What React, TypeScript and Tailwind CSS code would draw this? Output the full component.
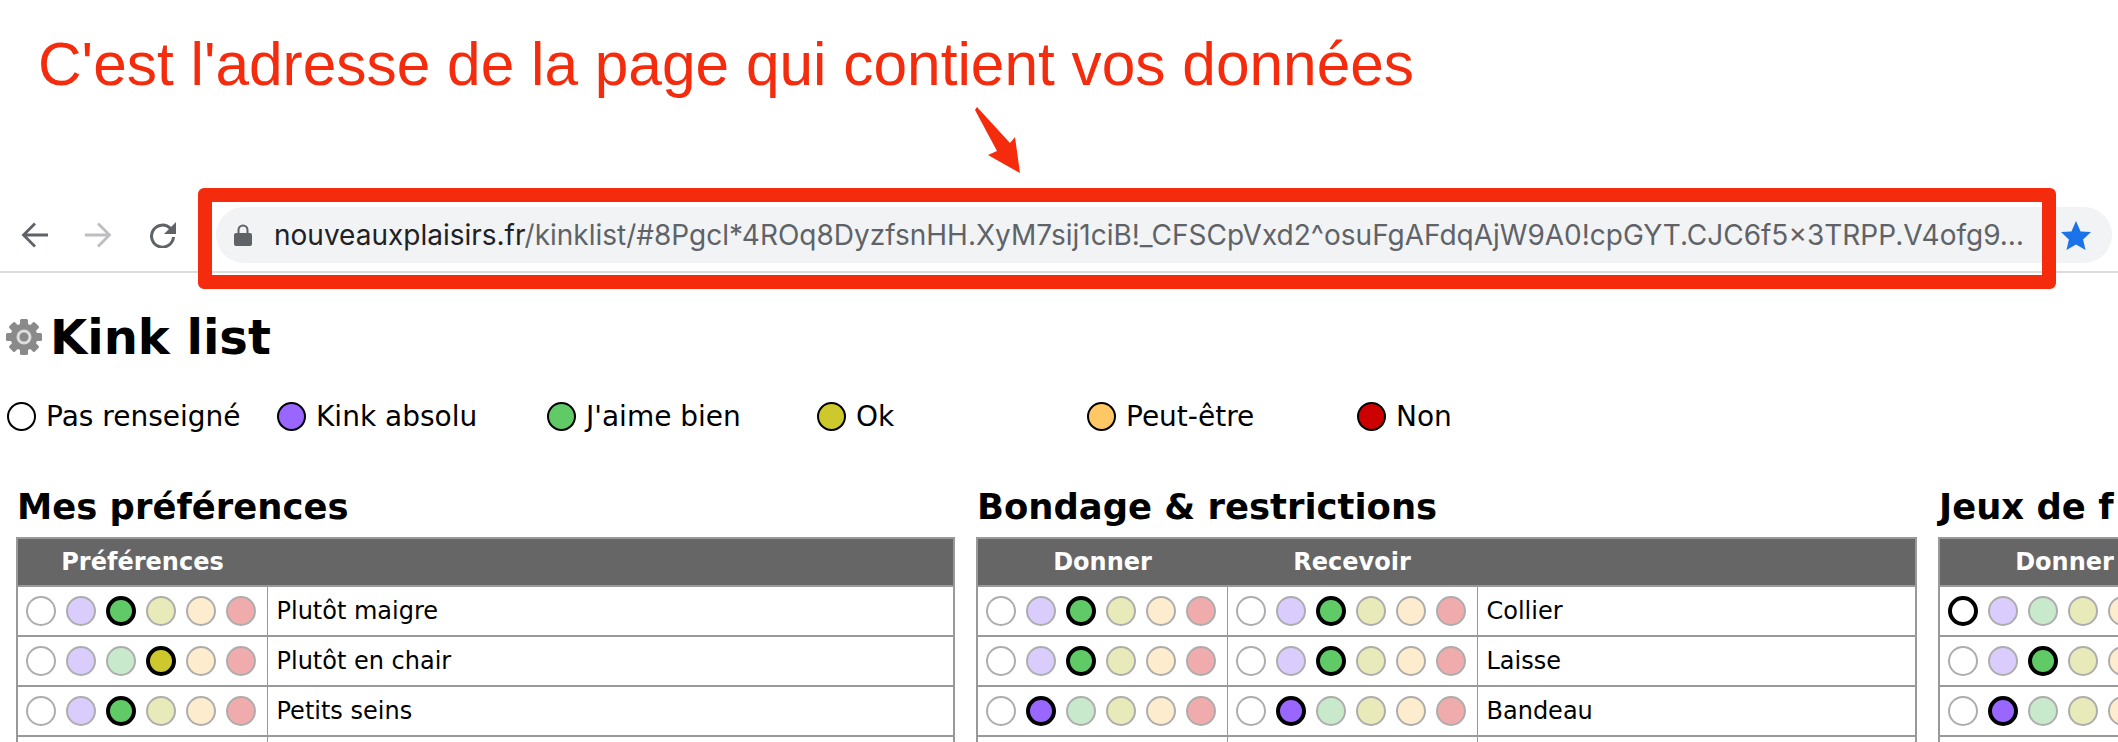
const sans = "font-['DejaVu_Sans',sans-serif]";

// couleurs des pastilles
const COLORS = [
  { on: "bg-white", off: "bg-white" },
  { on: "bg-[#9966ff]", off: "bg-[#dacdfe]" },
  { on: "bg-[#5fca66]", off: "bg-[#c9e9cc]" },
  { on: "bg-[#cdc82c]", off: "bg-[#e9eaba]" },
  { on: "bg-[#ffc864]", off: "bg-[#fdedce]" },
  { on: "bg-[#cc0000]", off: "bg-[#f0acac]" },
];

const LEGEND = ["Pas renseigné", "Kink absolu", "J'aime bien", "Ok", "Peut-être", "Non"];

function Dot({ color, selected }: { color: number; selected: boolean }) {
  const c = COLORS[color];
  return (
    <span
      className={`block w-[30px] h-[30px] shrink-0 rounded-full ${
        selected ? `${c.on} border-[4px] border-black` : `${c.off} border-2 border-[#adadad]`
      }`}
    />
  );
}

function Choice({ value }: { value?: number }) {
  return (
    <td className="border border-[#999] border-y-[2px] p-0 w-[250px] min-w-[250px]">
      <div className="flex gap-[10px] pl-[8px] h-[48px] items-center">
        {[0, 1, 2, 3, 4, 5].map((i) => (
          <Dot key={i} color={i} selected={i === value} />
        ))}
      </div>
    </td>
  );
}

function Section({
  title,
  heads,
  rows,
  width,
}: {
  title: string;
  heads: string[];
  rows: { values: (number | undefined)[]; label: string }[];
  width: string;
}) {
  return (
    <section className={`shrink-0 ${width}`}>
      <h2 className="text-[35.400px] leading-[42px] font-bold text-black pl-px h-[51px] whitespace-nowrap">{title}</h2>
      <table className="w-full border-collapse border-2 border-[#999] table-fixed">
        <colgroup>
          {heads.map((h) => (
            <col key={h} className="w-[250px]" />
          ))}
          <col />
        </colgroup>
        <thead>
          <tr className="bg-[#666] h-[48px] border-y-2 border-[#999]">
            {heads.map((h) => (
              <th key={h} className="text-white font-bold text-[24px] text-center p-0">
                {h}
              </th>
            ))}
            <th />
          </tr>
        </thead>
        <tbody>
          {rows.map((r, n) => (
            <tr key={n} className="h-[50px]">
              {r.values.map((v, i) => (
                <Choice key={i} value={v} />
              ))}
              <td className="border-y-[2px] border-[#999] pl-[9px] text-[24px] text-black whitespace-nowrap">{r.label}</td>
            </tr>
          ))}
          <tr className="h-[50px]">
            {heads.map((h) => (
              <Choice key={h} />
            ))}
            <td className="border-y-[2px] border-[#999]" />
          </tr>
        </tbody>
      </table>
    </section>
  );
}

export default function App() {
  return (
    <div className="relative w-[2118px] h-[742px] overflow-hidden bg-white">
      {/* annotation */}
      <div className="h-[204px] pl-[38px] pt-[29px]">
        <h1 className="font-['Liberation_Sans',Arial,sans-serif] text-[60.400px] leading-[70px] text-[#f42b0c] whitespace-nowrap">
          C'est l'adresse de la page qui contient vos données
        </h1>
      </div>

      {/* barre du navigateur */}
      <div className="flex items-center h-[69px] border-b-2 border-[#dcdcdc] pl-[21px] pb-[5px]">
        <svg width="27" height="26" viewBox="0 0 27 26" fill="none" stroke="#5f6368" strokeWidth="2.8">
          <path d="M27 13H3M14 1.500 2.500 13 14 24.500" />
        </svg>
        <svg className="ml-[37px]" width="27" height="26" viewBox="0 0 27 26" fill="none" stroke="#bcbec1" strokeWidth="2.8">
          <path d="M0 13h24M13 1.500 24.500 13 13 24.500" />
        </svg>
        <svg className="ml-[37px]" width="28" height="26" viewBox="0 0 28 26">
          <path d="M21.500 6.500A11 11 0 1 0 24.500 15" fill="none" stroke="#5f6368" strokeWidth="3" />
          <path d="M27 0v12H15z" fill="#5f6368" />
        </svg>
        <div className="ml-[39px] w-[1896px] h-[56px] shrink-0 rounded-[28px] bg-[#f1f3f4] flex items-center pl-[18px]">
          <svg className="shrink-0" width="18" height="22" viewBox="0 0 18 22" fill="#5f6368">
            <path d="M2 9h14a2 2 0 0 1 2 2v9a2 2 0 0 1-2 2H2a2 2 0 0 1-2-2v-9a2 2 0 0 1 2-2z" />
            <path d="M4.500 10V6a4.500 4.500 0 0 1 9 0v4" fill="none" stroke="#5f6368" strokeWidth="2" />
          </svg>
          <span className="ml-[22px] font-['Inter',sans-serif] text-[28px] text-[#5f6368] whitespace-nowrap w-[1787px] shrink-0 overflow-hidden">
            <span className="text-[#202124]">nouveauxplaisirs.fr</span>/kinklist/#8Pgcl*4ROq8DyzfsnHH.XyM7sij1ciB!_CFSCpVxd2^osuFgAFdqAjW9A0!cpGYT.CJC6f5x3TRPP.V4ofg9…
          </span>
          <svg className="shrink-0" width="30" height="29" viewBox="0 0 30 29" fill="#1a73e8">
            <path d="M15 0l4.600 10.400L30 11.100l-7.900 7.300 2.400 10.600L15 23.400 5.500 29l2.400-10.600L0 11.100l10.400-.7z" />
          </svg>
        </div>
      </div>

      {/* page */}
      <div className={sans}>
        <div className="flex items-center pl-[6px] pt-[45px] h-[82px]">
          <svg className="shrink-0" width="36" height="36" viewBox="0 0 36 36" fill="#8a8a8a">
            {[0, 45, 90, 135, 180, 225, 270, 315].map((a) => (
              <rect key={a} x="14" y="0" width="8" height="10" rx="1.500" transform={`rotate(${a} 18 18)`} />
            ))}
            <circle cx="18" cy="18" r="13.500" />
            <circle cx="18" cy="18" r="7.500" fill="#dddddd" />
            <circle cx="18" cy="18" r="4.500" />
          </svg>
          <span className="ml-[8px] text-[48px] leading-none font-bold text-black">Kink list</span>
        </div>
        <div className="flex pl-[7px] mt-[47px] h-[29px] items-center text-[28px] text-black">
          {LEGEND.map((l, i) => (
            <div key={l} className="flex items-center gap-[10px] w-[270px] whitespace-nowrap">
              <span className={`block w-[29px] h-[29px] rounded-full border-2 border-black ${COLORS[i].on}`} />
              {l}
            </div>
          ))}
        </div>
        <div className="flex gap-[21px] pl-[16px] mt-[55px]">
          <Section
            title="Mes préférences"
            heads={["Préférences"]}
            width="w-[939px]"
            rows={[
              { values: [2], label: "Plutôt maigre" },
              { values: [3], label: "Plutôt en chair" },
              { values: [2], label: "Petits seins" },
            ]}
          />
          <Section
            title="Bondage & restrictions"
            heads={["Donner", "Recevoir"]}
            width="w-[941px]"
            rows={[
              { values: [2, 2], label: "Collier" },
              { values: [2, 2], label: "Laisse" },
              { values: [1, 1], label: "Bandeau" },
            ]}
          />
          <Section
            title="Jeux de f"
            heads={["Donner"]}
            width="w-[940px]"
            rows={[
              { values: [0], label: "" },
              { values: [2], label: "" },
              { values: [1], label: "" },
            ]}
          />
        </div>
      </div>

      {/* cadre rouge et flèche */}
      <div className="absolute left-[198px] top-[188px] w-[1858px] h-[101px] rounded-[6px] border-[14px] border-[#f42b0c]" />
      <svg className="absolute left-[970px] top-[104px]" width="60" height="76" viewBox="970 104 60 76" fill="#f42b0c">
        <path d="M975 110 977 107 1010 143 1015 137 1020 173 988 155 997 151z" />
      </svg>
    </div>
  );
}
